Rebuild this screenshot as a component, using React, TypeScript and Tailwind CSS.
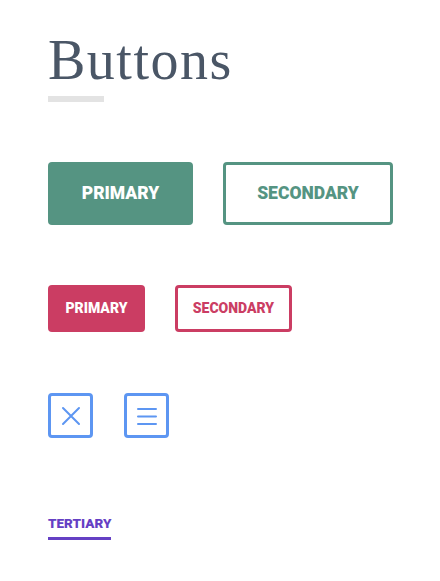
import React from 'react'

const XIcon = () => (
  <svg width="20" height="20" viewBox="0 0 20 20" fill="none" stroke="currentColor" strokeWidth="2" strokeLinecap="round">
    <path d="M2 2 L18 18 M18 2 L2 18" />
  </svg>
)

const MenuIcon = () => (
  <svg width="20" height="18" viewBox="0 0 20 18" fill="none" stroke="currentColor" strokeWidth="2" strokeLinecap="round">
    <path d="M1 2 H19 M1 9.5 H19 M1 17 H19" />
  </svg>
)

export default function App() {
  return (
    <div className="min-h-[581px] w-[440px] bg-white pl-12 pt-[32px]" style={{ fontFamily: 'Roboto, "Liberation Sans", sans-serif' }}>
      <h1
        className="text-[56px] leading-[56px] text-[#4a5666] tracking-[1.5px]"
        style={{ fontFamily: '"Liberation Serif", serif' }}
      >
        Buttons
      </h1>
      <div className="mt-[8px] h-[6px] w-[56px] bg-[#e3e3e3]" />

      <div className="mt-[60px] flex gap-[30px]">
        <button className="flex h-[63px] w-[145px] items-center justify-center rounded-[4px] bg-[#559482] text-[17.5px] font-black text-white">
          PRIMARY
        </button>
        <button className="flex h-[63px] w-[170px] items-center justify-center rounded-[4px] border-[3px] border-[#559482] bg-white text-[17.5px] font-black text-[#559482]">
          SECONDARY
        </button>
      </div>

      <div className="mt-[60px] flex gap-[30px]">
        <button className="flex h-[47px] w-[97px] items-center justify-center rounded-[4px] bg-[#cb3d63] text-[14px] font-black text-white">
          PRIMARY
        </button>
        <button className="flex h-[47px] w-[117px] items-center justify-center rounded-[4px] border-[3px] border-[#cb3d63] bg-white text-[14px] font-black text-[#cb3d63]">
          SECONDARY
        </button>
      </div>

      <div className="mt-[61px] flex gap-[31px]">
        <button className="flex h-[45px] w-[45px] items-center justify-center rounded-[4px] border-[3px] border-[#5d96f2] text-[#5d96f2]">
          <XIcon />
        </button>
        <button className="flex h-[45px] w-[45px] items-center justify-center rounded-[4px] border-[3px] border-[#5d96f2] text-[#5d96f2]">
          <MenuIcon />
        </button>
      </div>

      <div className="mt-[77px] inline-flex flex-col">
        <span className="text-[13.5px] font-black leading-[16px] text-[#6540c4]">TERTIARY</span>
        <span className="mt-[6px] h-[3px] w-full bg-[#6540c4]" />
      </div>
    </div>
  )
}
